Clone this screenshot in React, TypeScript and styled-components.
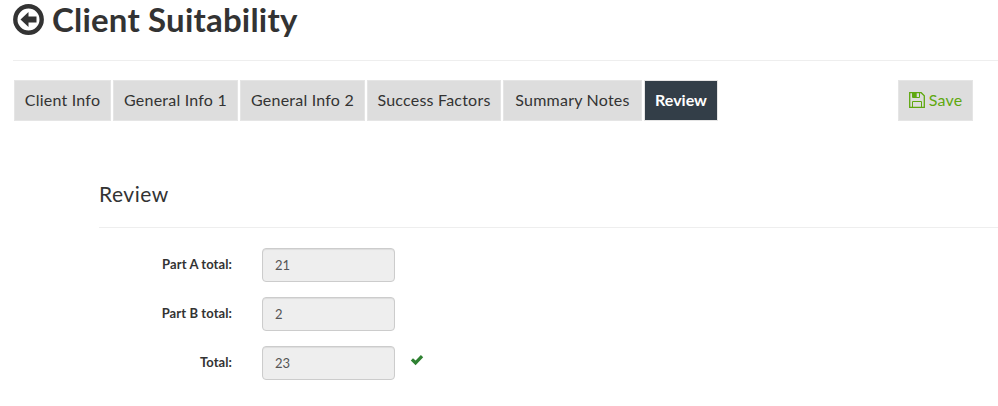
import React from "react";
import styled, { createGlobalStyle } from "styled-components";

const GlobalStyle = createGlobalStyle`
  *, *::before, *::after { box-sizing: border-box; }
  body {
    margin: 0;
    background: #fff;
    color: #333;
    font-family: Lato, sans-serif;
    overflow: hidden;
  }
`;

const Page = styled.main`
  height: 406px;
  overflow: hidden;
`;

const Header = styled.header`
  display: flex;
  align-items: center;
  gap: 8px;
  height: 61px;
  margin-left: 13px;
  padding-bottom: 22px;
  border-bottom: 1px solid #eee;
`;

const Title = styled.h1`
  margin: 0;
  font: 700 33px/38px Lato, sans-serif;
  letter-spacing: 0.2px;
  white-space: nowrap;
`;

const Toolbar = styled.nav`
  display: flex;
  align-items: center;
  gap: 2px;
  margin: 19px 25px 0 14px;
`;

const Tab = styled.button<{ $width: number; $active?: boolean }>`
  display: flex;
  align-items: center;
  justify-content: center;
  width: ${(p) => p.$width}px;
  height: 41px;
  padding: 0 0 2px;
  border: 1px solid #e5e5e5;
  background: ${(p) => (p.$active ? "#333e48" : "#ddd")};
  color: ${(p) => (p.$active ? "#fff" : "#333")};
  font: ${(p) => (p.$active ? 700 : 400)} 16px/19px Lato, sans-serif;
  letter-spacing: ${(p) => (p.$active ? 0 : 0.22)}px;
  white-space: nowrap;
`;

const SaveButton = styled(Tab)`
  gap: 4px;
  margin-left: auto;
  color: #5fa80f;
`;

const Section = styled.section`
  margin: 60px 0 0 99px;
`;

const SectionTitle = styled.h2`
  height: 47px;
  margin: 0 0 20px;
  border-bottom: 1px solid #eee;
  font: 400 21px/26px Lato, sans-serif;
  letter-spacing: 0.5px;
`;

const Row = styled.div`
  display: flex;
  height: 34px;
  margin-bottom: 15px;
`;

const Label = styled.label`
  width: 133px;
  margin-right: 30px;
  font: 700 13px/33px Lato, sans-serif;
  letter-spacing: 0.09px;
  text-align: right;
  white-space: nowrap;
`;

const Field = styled.input`
  width: 133px;
  height: 34px;
  padding: 0 12px;
  border: 1px solid #ccc;
  border-radius: 4px;
  background: #eee;
  box-shadow: inset 0 1px 1px rgba(0, 0, 0, 0.075);
  color: #555;
  font: 400 13px/20px Lato, sans-serif;
`;

const CheckMark = styled.svg`
  margin: 7px 0 0 15px;
`;

const BackIcon = () => (
  <svg width="31" height="31" viewBox="0 0 31 31" aria-hidden="true">
    <circle cx="15.5" cy="15.5" r="13.2" fill="none" stroke="#333" strokeWidth="4.4" />
    <path d="M7.5 15.5 15.5 8v4.5h8v6h-8V23z" fill="#333" />
  </svg>
);

const SaveIcon = () => (
  <svg width="16" height="16" viewBox="0 0 16 16" fill="none" stroke="#5fa80f" aria-hidden="true">
    <path d="M.7.7h11.5l3.1 3.1v11.5H.7z" strokeWidth="1.3" />
    <path d="M3.5 15V9.5h9V15M10.5 1v4.5h-7V1" />
    <path d="M4 1h3.7v4.5H4z" fill="#5fa80f" stroke="none" />
  </svg>
);

const tabs = [
  { label: "Client Info", width: 97 },
  { label: "General Info 1", width: 125 },
  { label: "General Info 2", width: 125 },
  { label: "Success Factors", width: 134 },
  { label: "Summary Notes", width: 139 },
  { label: "Review", width: 74, active: true },
];

const totals = [
  { label: "Part A total:", value: "21" },
  { label: "Part B total:", value: "2" },
  { label: "Total:", value: "23", valid: true },
];

export default function App() {
  return (
    <Page>
      <GlobalStyle />
      <Header>
        <BackIcon />
        <Title>Client Suitability</Title>
      </Header>
      <Toolbar>
        {tabs.map((t) => (
          <Tab key={t.label} $width={t.width} $active={t.active}>
            {t.label}
          </Tab>
        ))}
        <SaveButton $width={75}>
          <SaveIcon />
          Save
        </SaveButton>
      </Toolbar>
      <Section>
        <SectionTitle>Review</SectionTitle>
        {totals.map((t) => (
          <Row key={t.label}>
            <Label htmlFor={t.label}>{t.label}</Label>
            <Field id={t.label} value={t.value} readOnly />
            {t.valid && (
              <CheckMark width="14" height="14" viewBox="0 0 14 14">
                <path d="M.8 7.4 3 5.2 5.6 7.6 10.9 2 13.2 4.3 5.6 12.2z" fill="#2f8132" />
              </CheckMark>
            )}
          </Row>
        ))}
      </Section>
    </Page>
  );
}
